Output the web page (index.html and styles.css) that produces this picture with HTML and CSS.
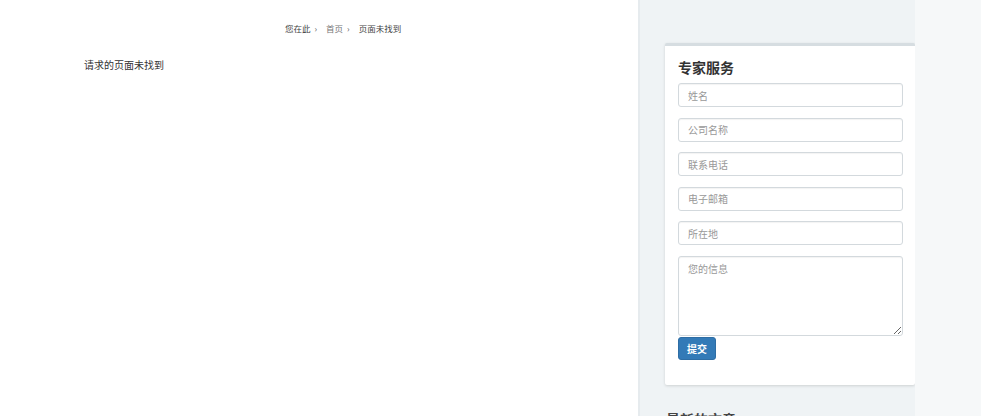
FILE: index.html
```html
<!DOCTYPE html>
<html lang="zh">
<head>
<meta charset="utf-8">
<title>页面未找到</title>
<link rel="stylesheet" href="styles.css">
</head>
<body>
<div class="page">
  <main class="main">
    <nav class="breadcrumb">
      <span>您在此</span><span class="sep">›</span>
      <a href="#">首页</a><span class="sep">›</span>
      <span>页面未找到</span>
    </nav>
    <p class="notfound">请求的页面未找到</p>
  </main>
  <aside class="sidebar">
    <section class="card">
      <h3 class="card-title">专家服务</h3>
      <form class="form">
        <input class="field" type="text" placeholder="姓名">
        <input class="field" type="text" placeholder="公司名称">
        <input class="field" type="text" placeholder="联系电话">
        <input class="field" type="text" placeholder="电子邮箱">
        <input class="field" type="text" placeholder="所在地">
        <textarea class="field area" placeholder="您的信息"></textarea>
        <button class="submit" type="button">提交</button>
      </form>
    </section>
    <h3 class="side-title">最新的文章</h3>
  </aside>
  <div class="rest"></div>
</div>
</body>
</html>
```
FILE: styles.css
```css
* { box-sizing: border-box; }
html, body { margin: 0; padding: 0; height: 100%; }
body {
  font-family: "Noto Sans CJK SC", "Liberation Sans", sans-serif;
  color: #333;
  background: #fff;
  overflow: hidden;
}
.page {
  display: flex;
  height: 416px;
}
.main {
  width: 638px;
  flex: none;
  background: #fff;
}
.breadcrumb {
  padding: 21px 0 0 285px;
  font-size: 8.5px;
  line-height: 14px;
  color: #444;
  display: flex;
  align-items: center;
}
.breadcrumb a { color: #777; text-decoration: none; }
.breadcrumb .sep { margin: 0 9px 0 4px; color: #555; }
.notfound {
  margin: 23px 0 0 84px;
  font-size: 10px;
  line-height: 14px;
  color: #333;
}
.sidebar {
  width: 277px;
  flex: none;
  background: #eff3f5;
  border-left: 2px solid #e6ebee;
  padding: 43px 0 0 25px;
}
.card {
  width: 250px;
  background: #fff;
  border-top: 3px solid #d6dde1;
  border-radius: 2px;
  box-shadow: 0 1px 3px rgba(0,0,0,0.14);
  padding: 11px 12px 25px 13px;
}
.card-title {
  margin: 0 0 6px;
  font-size: 14px;
  line-height: 20px;
  font-weight: 700;
  color: #333;
}
.form { display: flex; flex-direction: column; align-items: flex-start; }
.field {
  width: 225px;
  height: 24px;
  margin: 0 0 10.5px;
  padding: 0 9px;
  border: 1px solid #d3d9dd;
  border-radius: 3px;
  box-shadow: inset 0 1px 1px rgba(0,0,0,0.05);
  font-family: inherit;
  font-size: 10px;
  color: #555;
  background: #fff;
}
.field::placeholder { color: #999; }
.area {
  height: 80px;
  margin-bottom: 1px;
  padding-top: 4px;
  resize: vertical;
}
.submit {
  width: 38px;
  height: 23px;
  border: 1px solid #2e6da4;
  border-radius: 3px;
  background: #337ab7;
  color: #fff;
  font-family: inherit;
  font-size: 10px;
  font-weight: 700;
  padding: 0;
}
.side-title {
  margin: 24px 0 0 1px;
  font-size: 14px;
  line-height: 20px;
  font-weight: 700;
  color: #444;
}
.rest {
  flex: 1;
  background: #f6f8f9;
}
```
